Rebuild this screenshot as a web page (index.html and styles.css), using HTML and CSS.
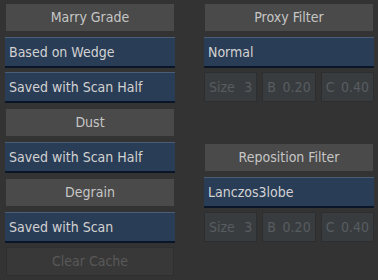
FILE: index.html
```html
<html lang="en">
<head>
    <meta charset="UTF-8">
    <title>Filters</title>
    <link rel="stylesheet" href="styles.css">
</head>
<body>
<div class="panel">
    <div class="column">
        <div class="head">Marry Grade</div>
        <div class="field">Based on Wedge</div>
        <div class="field">Saved with Scan Half</div>
        <div class="head">Dust</div>
        <div class="field">Saved with Scan Half</div>
        <div class="head">Degrain</div>
        <div class="field">Saved with Scan</div>
        <div class="btn-off">Clear Cache</div>
    </div>

    <div class="column right">
        <div class="head">Proxy Filter</div>
        <div class="field">Normal</div>
        <div class="params">
            <div class="param"><span>Size</span><span>3</span></div>
            <div class="param"><span>B</span><span>0.20</span></div>
            <div class="param"><span>C</span><span>0.40</span></div>
        </div>
        <div class="head spaced">Reposition Filter</div>
        <div class="field">Lanczos3lobe</div>
        <div class="params">
            <div class="param"><span>Size</span><span>3</span></div>
            <div class="param"><span>B</span><span>0.20</span></div>
            <div class="param"><span>C</span><span>0.40</span></div>
        </div>
    </div>
</div>
</body>
</html>
```

FILE: styles.css
```css
/* Filter panel */
body { margin: 0; background-color: #333333; font-family: "DejaVu Sans Condensed", "Liberation Sans", Arial, sans-serif; font-size: 14px; }
.panel { display: flex; padding: 4px 0 0 5px; }
.column { width: 170px; display: flex; flex-direction: column; gap: 6px; }
.right { margin-left: 29px; }

.head { margin: 0 1px; height: 27px; line-height: 27px; background-color: #4a4a4a; color: #c6c6c6; text-align: center; }
.head.spaced { margin-top: 36px; }

.field { height: 31px; box-sizing: border-box; line-height: 28px; padding-left: 4px; background-color: #2a3d56; border-top: 1px solid #4b5e77; border-bottom: 2px solid #0a1528; color: #d2d2d2; }
.field + .field, .field + .btn-off, .field + .params { margin-top: -2px; }

.btn-off { margin: 0 1px; height: 29px; box-sizing: border-box; line-height: 27px; background-color: #383838; border: 1px solid #2e2e2e; color: #595959; text-align: center; }

.params { display: flex; gap: 5px; }
.param { flex: 1; height: 30px; box-sizing: border-box; line-height: 28px; display: flex; justify-content: space-between; padding: 0 4px; background-color: #393c3e; border: 1px solid #2c2e30; color: #575c61; }
```
